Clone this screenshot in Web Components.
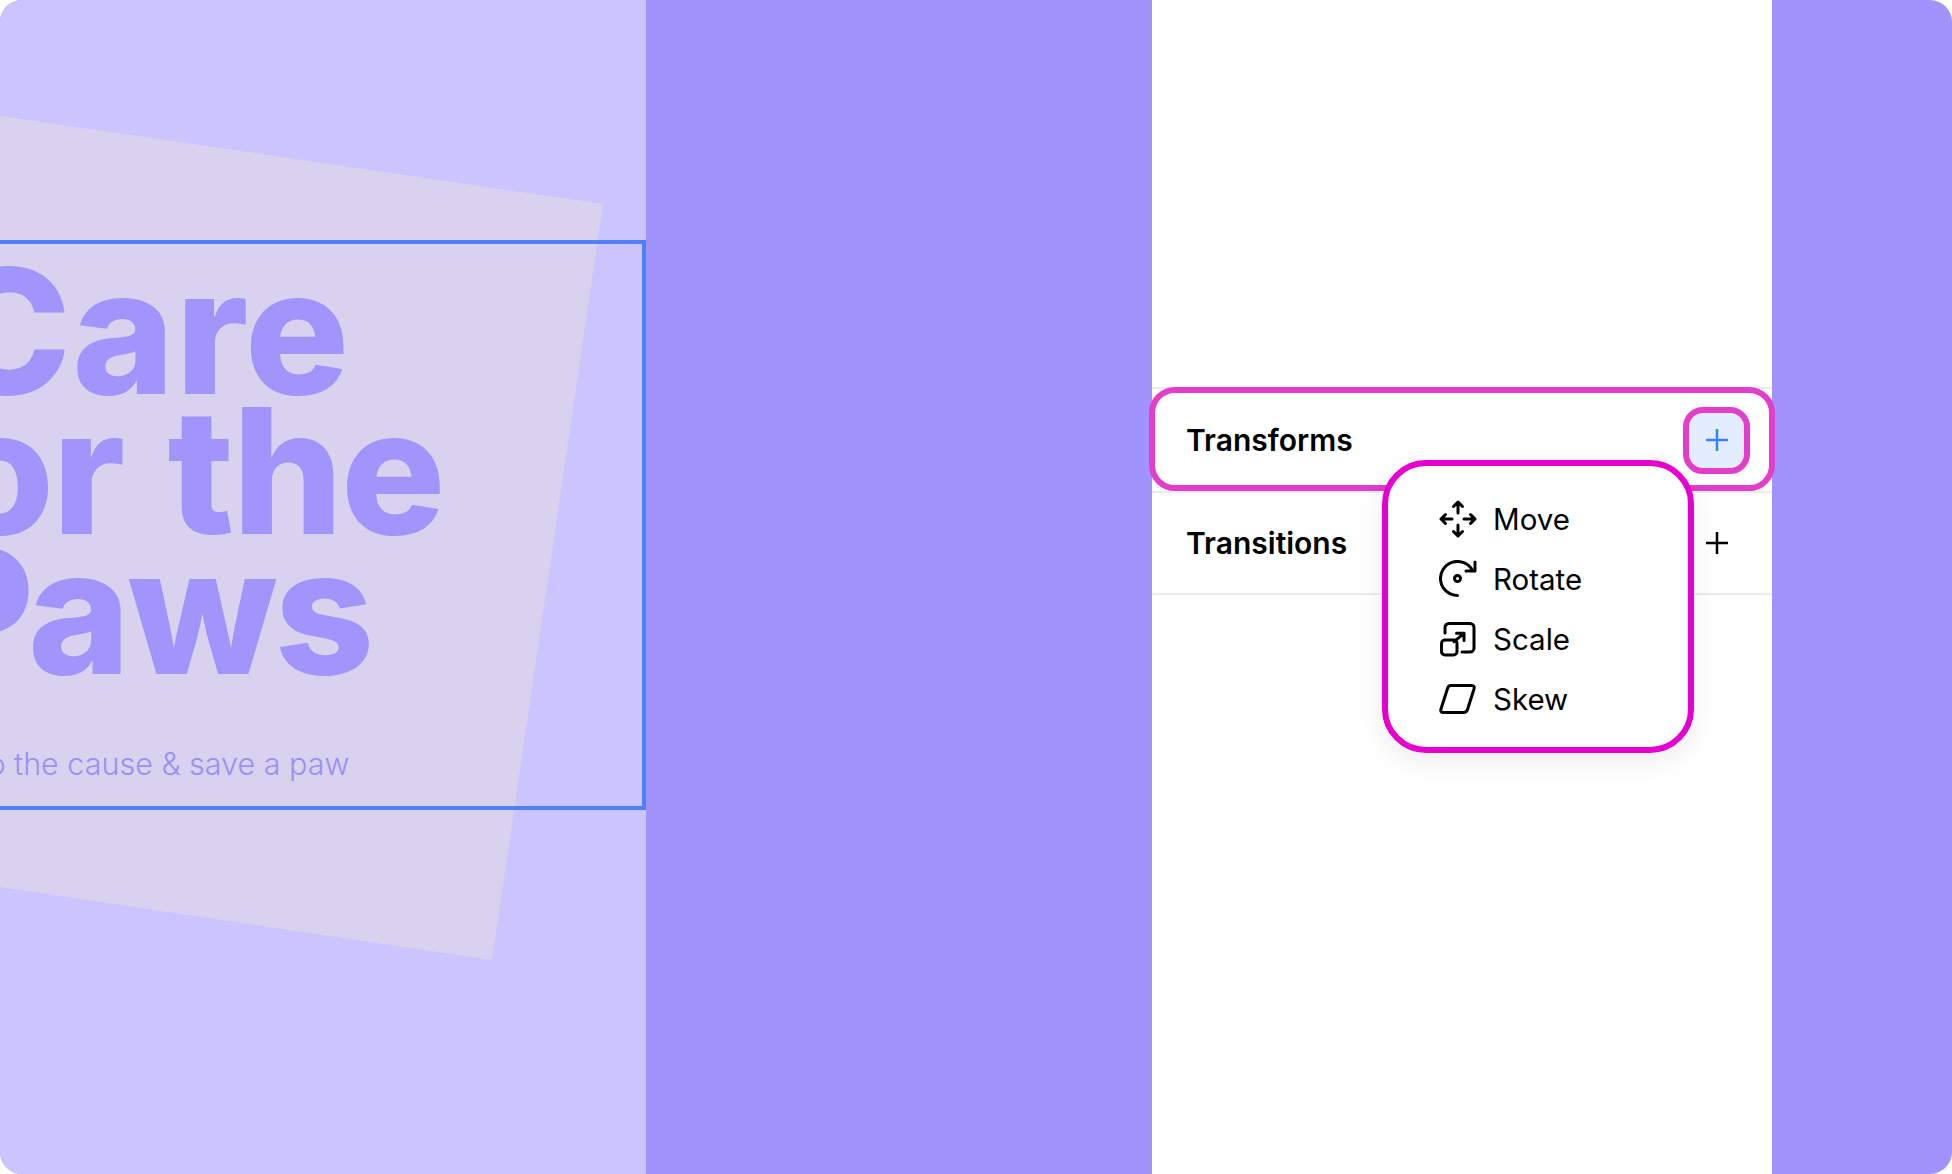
<!DOCTYPE html>
<html lang="en">
<head>
<meta charset="utf-8">
<title>Transforms</title>
<style>
	html, body { margin: 0; height: 100%; background: #fff; }
	body { font-family: "Inter", "Liberation Sans", sans-serif; }
</style>
</head>
<body>
<design-frame>
	<poster-canvas slot="canvas"></poster-canvas>
	<transform-panel slot="panel">
		<panel-row label="Transforms" active></panel-row>
		<panel-row label="Transitions"></panel-row>
		<transform-menu>
			<menu-item label="Move" icon="move"></menu-item>
			<menu-item label="Rotate" icon="rotate"></menu-item>
			<menu-item label="Scale" icon="scale"></menu-item>
			<menu-item label="Skew" icon="skew"></menu-item>
		</transform-menu>
	</transform-panel>
</design-frame>

<script>
const ICONS = {
	move: '<path d="M19 2V13M19 25V36M2 19H13M25 19H36M14.500 6.500 19 2l4.500 4.500M14.500 31.500 19 36l4.500-4.500M6.500 14.500 2 19l4.500 4.500M31.500 14.500 36 19l-4.500 4.500"/>',
	rotate: '<path d="M18.500 35.500A17 17 0 1 1 33.500 10.500"/><path d="M36 2V11H27"/><circle cx="18.500" cy="18.500" r="3"/>',
	scale: '<path d="M6 13V7.500A4 4 0 0 1 10 3.500H31A4 4 0 0 1 35 7.500V28A4 4 0 0 1 31 32H23"/><rect x="2.500" y="20" width="15.500" height="15" rx="3.500"/><path d="M15 21.700 25 13.300M17.500 13.300H25V20.500"/>',
	skew: '<path d="M11.500 5.500H32.500Q36 5.500 35 9L28.500 29.500Q27.500 32.500 24.500 32.500H4.500Q1 32.500 2 29L8.500 8.500Q9.500 5.500 11.500 5.500Z"/>'
};

class DesignFrame extends HTMLElement {
	connectedCallback() {
		if (this.shadowRoot) {
			return;
		}
		this.attachShadow({ mode: 'open' });
		this.shadowRoot.innerHTML = `
			<style>
				:host {
					display: grid;
					grid-template-columns: 646px 506px 620px 180px;
					width: 1952px;
					height: 1174px;
					border-radius: 22px;
					overflow: hidden;
					background: #a093fc;
				}
			</style>
			<slot name="canvas"></slot>
			<div></div>
			<slot name="panel"></slot>
		`;
	}
}

class PosterCanvas extends HTMLElement {
	connectedCallback() {
		if (this.shadowRoot) {
			return;
		}
		this.attachShadow({ mode: 'open' });
		this.shadowRoot.innerHTML = `
			<style>
				:host {
					display: block;
					position: relative;
					overflow: hidden;
					padding-top: 240px;
					background: #ccc4fe;
				}
				svg {
					position: absolute;
					left: 0;
					top: 0;
				}
				.frame {
					position: relative;
					box-sizing: border-box;
					height: 570px;
					width: 1000px;
					margin-left: -354px;
					border: 4px solid #5080f6;
					color: #a194fb;
					text-align: center;
				}
				h1 {
					margin: 0;
					padding-top: 17px;
					font: 800 174px/140px "Inter", sans-serif;
					letter-spacing: 1px;
				}
				h1 span {
					display: block;
				}
				h1 .mid {
					padding-left: 32px;
					letter-spacing: -2px;
					word-spacing: 8px;
				}
				h1 .end {
					letter-spacing: -3px;
				}
				p {
					margin: 65px 0 0;
					padding-right: 74px;
					font: 300 30.500px/36px "Inter", sans-serif;
					color: #9b90f2;
				}
			</style>
			<svg width="646" height="1174"><polygon points="0,116 603,204 492,960 0,887" fill="#d8d2ee"/></svg>
			<div class="frame">
				<h1><span>Care</span><span class="mid">for the</span><span class="end">Paws</span></h1>
				<p>Donate to the cause &amp; save a paw</p>
			</div>
		`;
	}
}

class TransformPanel extends HTMLElement {
	connectedCallback() {
		if (this.shadowRoot) {
			return;
		}
		this.attachShadow({ mode: 'open' });
		this.shadowRoot.innerHTML = `
			<style>
				:host {
					display: block;
					position: relative;
					padding-top: 387px;
					background: #fff;
				}
				::slotted(transform-menu) {
					position: absolute;
					left: 230px;
					top: 460px;
				}
			</style>
			<slot></slot>
		`;
	}
}

class PanelRow extends HTMLElement {
	connectedCallback() {
		if (this.shadowRoot) {
			return;
		}
		const label = this.getAttribute('label') || '';
		this.attachShadow({ mode: 'open' });
		this.shadowRoot.innerHTML = `
			<style>
				:host {
					display: flex;
					position: relative;
					align-items: center;
					justify-content: space-between;
					height: 102px;
					padding: 0 22px 0 34px;
					border-top: 2px solid #ececec;
					color: #000;
				}
				:host(:last-of-type) {
					height: 100px;
					border-bottom: 2px solid #ececec;
				}
				:host([active])::after {
					content: "";
					position: absolute;
					inset: -2px -3px 0;
					border: 6px solid #e23ec9;
					border-radius: 26px;
				}
				span {
					font: 600 30px/36px "Inter", sans-serif;
				}
				button {
					display: flex;
					align-items: center;
					justify-content: center;
					box-sizing: border-box;
					width: 67px;
					height: 67px;
					padding: 0;
					border: 6px solid transparent;
					border-radius: 20px;
					background: none;
					color: #000;
				}
				:host([active]) button {
					border-color: #e23ec9;
					background: #e3edfe;
					color: #3b82f6;
				}
				svg {
					display: block;
				}
			</style>
			<span>${label}</span>
			<button aria-label="Add"><svg width="24" height="24" viewBox="0 0 24 24" fill="none" stroke="currentColor" stroke-width="2.500"><path d="M12 1V23M1 12H23"/></svg></button>
		`;
	}
}

class TransformMenu extends HTMLElement {
	connectedCallback() {
		if (this.shadowRoot) {
			return;
		}
		this.attachShadow({ mode: 'open' });
		this.shadowRoot.innerHTML = `
			<style>
				:host {
					display: flex;
					flex-direction: column;
					box-sizing: border-box;
					width: 312px;
					height: 293px;
					padding: 23px 0 18px 51px;
					border: 6px solid #e600cf;
					border-radius: 44px;
					background: #fff;
					box-shadow: 0 8px 28px rgba(0, 0, 0, 0.08);
				}
			</style>
			<slot></slot>
		`;
	}
}

class MenuItem extends HTMLElement {
	connectedCallback() {
		if (this.shadowRoot) {
			return;
		}
		const label = this.getAttribute('label') || '';
		const icon = ICONS[this.getAttribute('icon')] || '';
		this.attachShadow({ mode: 'open' });
		this.shadowRoot.innerHTML = `
			<style>
				:host {
					display: flex;
					align-items: center;
					gap: 16px;
					height: 60px;
					color: #000;
					font: 400 29.500px/36px "Inter", sans-serif;
				}
				svg {
					display: block;
					flex: none;
				}
			</style>
			<svg width="38" height="38" viewBox="0 0 38 38" fill="none" stroke="currentColor" stroke-width="3" stroke-linecap="round" stroke-linejoin="round">${icon}</svg>
			<span>${label}</span>
		`;
	}
}

customElements.define('design-frame', DesignFrame);
customElements.define('poster-canvas', PosterCanvas);
customElements.define('transform-panel', TransformPanel);
customElements.define('panel-row', PanelRow);
customElements.define('transform-menu', TransformMenu);
customElements.define('menu-item', MenuItem);
</script>
</body>
</html>
